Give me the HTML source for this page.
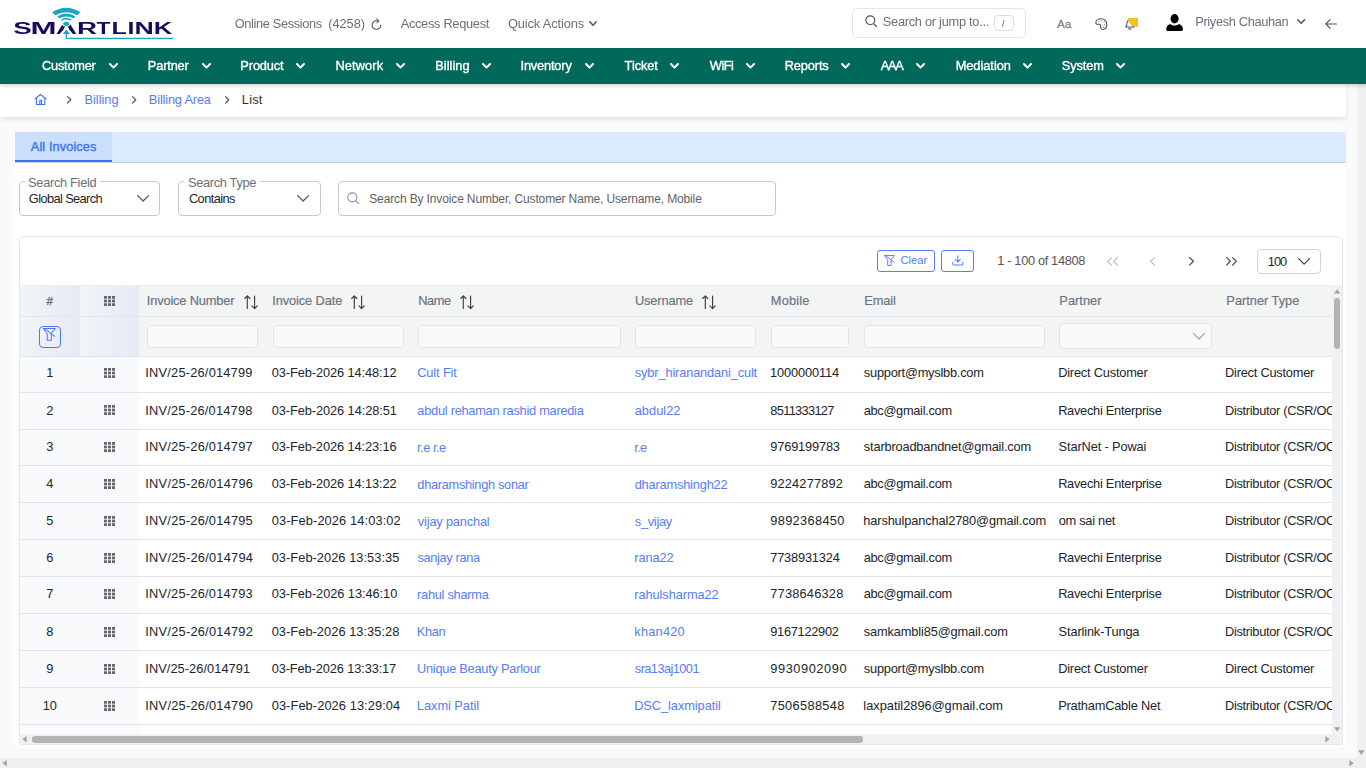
<!DOCTYPE html>
<html lang="en">
<head>
<meta charset="utf-8">
<title>SmartLink - Billing - All Invoices</title>
<style>
*{box-sizing:border-box}
html,body{margin:0;padding:0}
body{width:1366px;height:768px;overflow:hidden;background:#fafafa;font-family:"Liberation Sans", Arial, Helvetica, sans-serif;position:relative;color:#212529}
.t{position:absolute;white-space:pre;line-height:16px;height:16px;text-decoration:none;margin:0;padding:0;font-weight:400}
.a{position:absolute}
.g{will-change:transform}
.m{-webkit-text-stroke:0.35px currentColor}
.h{-webkit-text-stroke:0.18px currentColor}
svg{position:absolute;overflow:visible}
header.top{position:absolute;left:0;top:0;width:1366px;height:48px;background:#fff;z-index:6}
nav.menu{position:absolute;left:0;top:48px;width:1366px;height:36px;background:#00695c;box-shadow:0 2px 4px rgba(0,0,0,.16);z-index:5}
.crumb{position:absolute;left:0;top:84px;width:1346px;height:33px;background:#fff;box-shadow:0 2px 5px rgba(0,0,0,.10)}
.card{position:absolute;left:15px;top:132px;width:1331px;height:616px;background:#fff;border-radius:0 0 6px 6px}
.tabs{position:absolute;left:15px;top:132px;width:1331px;height:31px;background:#dbeafe;border-bottom:1px solid #c5d3e8}
.tab{position:absolute;left:15px;top:132px;width:97px;height:30px;background:#cbdffd;border-bottom:2px solid #3f6fee}
.box{position:absolute;border:1px solid #c6c8d4;border-radius:4px;background:#fff}
.panel{position:absolute;left:19px;top:236px;width:1324px;height:509px;border:1px solid #e5e7ed;border-radius:5px 5px 1px 1px;background:#fff}
.hrow{position:absolute;left:20px;top:285px;width:1312px;height:32px;background:#f3f5f5;border-top:1px solid #ecedf0;border-bottom:1px solid #e3e5ea}
.frow{position:absolute;left:20px;top:317px;width:1312px;height:40px;background:#f3f5f5;border-bottom:1px solid #dfe1e8}
.fz{position:absolute;background:linear-gradient(90deg,#f1f4f8,#e6eaf2)}
.row{position:absolute;left:20px;width:1312px;background:#fff;border-bottom:1px solid #e2e4ea}
.fzr{position:absolute;background:#f9fafb}
.fin{position:absolute;border:1px solid #e3e5e8;border-radius:4px;background:#f8f9f9}
.sbt{position:absolute;background:#f0f0f0}
.sbth{position:absolute;background:#b3b3b3;border-radius:3px}
.btn{position:absolute;border:1px solid #5b7cf4;border-radius:3px;background:#fff}
</style>
</head>
<body>
<header class="top g">
<svg style="left:0;top:0" width="180" height="48" viewBox="0 0 180 48" role="img" aria-label="SMARTLINK">
<title>SMARTLINK</title>
<g fill="#1ea5c2">
<path d="M52.1 12.3Q66.3 3.2 80.5 12.3L77.2 15.2Q66.3 9.2 55.4 15.2Z"/>
<path d="M57.2 16.5Q66.3 10.6 75.4 16.5L73.6 18.3Q66.3 14.5 59.3 18.3Z"/>
<path d="M61.1 19.4Q66.3 16.2 71.3 19.4L70.5 20.8Q66.3 18.4 62.1 20.8Z"/>
</g>
<text y="33.9" font-family="Liberation Sans, Arial, sans-serif" font-weight="700" font-size="16.0" fill="#1a0a5e"><tspan x="13.20" textLength="18.48" lengthAdjust="spacingAndGlyphs">S</tspan><tspan x="30.61" textLength="25.97" lengthAdjust="spacingAndGlyphs">M</tspan><tspan x="55.67" textLength="21.31" lengthAdjust="spacingAndGlyphs">A</tspan><tspan x="76.95" textLength="20.02" lengthAdjust="spacingAndGlyphs">R</tspan><tspan x="96.55" textLength="13.80" lengthAdjust="spacingAndGlyphs">T</tspan><tspan x="111.42" textLength="15.35" lengthAdjust="spacingAndGlyphs">L</tspan><tspan x="127.53" textLength="6.94" lengthAdjust="spacingAndGlyphs">I</tspan><tspan x="134.51" textLength="19.29" lengthAdjust="spacingAndGlyphs">N</tspan><tspan x="153.88" textLength="18.56" lengthAdjust="spacingAndGlyphs">K</tspan></text>
<path d="M66.3 26.6L73.2 34.3H59.4Z" fill="#fff"/>
<ellipse cx="66.2" cy="23.6" rx="4.2" ry="3.2" fill="#fff"/>
<ellipse cx="66.2" cy="23.8" rx="3" ry="2.1" fill="#1ea5c2"/>
<path d="M66.3 29.5L70 33.9H62.6Z" fill="#1ea5c2"/>
<path d="M66.3 33.5V38.4H173" fill="none" stroke="#1ea5c2" stroke-width="1.2"/>
</svg>
<span class="t" style="left:234.69px;top:16px;font-size:12.8px;color:#6a7079;letter-spacing:-0.351px;">Online Sessions</span>
<span class="t" style="left:328.31px;top:16px;font-size:12.8px;color:#6a7079;letter-spacing:-0.062px;">(4258)</span>
<svg style="left:370.9px;top:18.1px" width="11.3" height="12.2" viewBox="0 0 13 14" fill="none" stroke="#4b5563" stroke-width="1.2" stroke-linecap="round" stroke-linejoin="round"><path d="M11.2 8.2A5 5 0 1 1 6.3 3.2H8.6"/><path d="M6.8 0.9L9 3.2L6.8 5.5"/></svg>
<span class="t" style="left:400.68px;top:16px;font-size:12.8px;color:#6a7079;letter-spacing:-0.296px;">Access Request</span>
<span class="t" style="left:507.89px;top:16px;font-size:12.8px;color:#6a7079;letter-spacing:-0.097px;">Quick Actions</span>
<svg style="left:589.4px;top:21px" width="8" height="5" viewBox="0 0 8 5"><polyline points="0.75,0.75 4.0,4.25 7.25,0.75" fill="none" stroke="#4b5563" stroke-width="1.5" stroke-linecap="round" stroke-linejoin="round"/></svg>
<div class="box" style="left:852px;top:8px;width:174px;height:30px;border-color:#e3e4ec;border-radius:5px"></div>
<svg style="left:865px;top:15.3px" width="12.2" height="12.2" viewBox="0 0 12 12" fill="none" stroke="#4b5563" stroke-width="1.2" stroke-linecap="round"><circle cx="5.2" cy="5.2" r="4.4"/><path d="M8.5 8.5L11.3 11.3"/></svg>
<span class="t" style="left:882.82px;top:14px;font-size:12.8px;color:#6a7079;letter-spacing:-0.275px;">Search or jump to...</span>
<div class="box" style="left:994px;top:15px;width:20px;height:16px;border-color:#dcdde3;border-radius:4px"></div>
<span class="t" style="left:1002.10px;top:16px;font-size:9px;color:#4b5563;">/</span>
<span class="t m" style="left:1057.28px;top:16px;font-size:11.4px;color:#858585;letter-spacing:0.185px;">Aa</span>
<svg style="left:1095px;top:17.7px" width="12.6" height="12.4" viewBox="0 0 13 13" fill="none" stroke="#4b5563" stroke-width="1.2" stroke-linejoin="round" stroke-linecap="round">
<path d="M6.3 0.8C3.1 0.8 0.7 2.6 0.7 4.9C0.7 6.2 1.9 6.8 3.4 6.6C5.2 6.4 6.2 7.4 5.9 9.2C5.7 10.8 6.6 12.2 8.2 12.1C10.6 11.9 12.3 9.5 12.3 6.6C12.3 3.3 9.7 0.8 6.3 0.8Z"/>
<g stroke-width="1.1"><path d="M4 3.4h.1M6.8 2.8h.1M9.4 4.2h.1M10.1 7.1h.1M8.6 9.8h.1"/></g></svg>
<svg style="left:1125.2px;top:19.1px" width="9.8" height="11.2" viewBox="0 0 11 12" fill="none" stroke="#4b525d" stroke-width="1.2" stroke-linejoin="round" stroke-linecap="round"><path d="M0.8 8.6C2 7.6 2.2 6.2 2.2 4.6C2.2 2.4 3.6 0.8 5.5 0.8C7.4 0.8 8.8 2.4 8.8 4.6C8.8 6.2 9 7.6 10.2 8.6Z"/><path d="M4.2 10.4A1.5 1.5 0 0 0 6.8 10.4"/></svg>
<div class="a" style="left:1128px;top:18px;width:10px;height:9.4px;background:#fbbc2c;border-radius:0 0 0 9px"></div>
<svg style="left:1166.2px;top:13.5px" width="17.2" height="17.2" viewBox="0 0 17 17" fill="#000"><ellipse cx="8.5" cy="4.7" rx="4" ry="4.6"/><path d="M0.2 15.2C0.2 12 2.6 10.2 4.6 10.2C5.6 11 7 11.4 8.5 11.4C10 11.4 11.4 11 12.4 10.2C14.4 10.2 16.8 12 16.8 15.2C16.8 16.3 16.2 16.9 15.2 16.9H1.8C0.8 16.9 0.2 16.3 0.2 15.2Z"/></svg>
<span class="t" style="left:1195.25px;top:14px;font-size:12.8px;color:#6a7079;letter-spacing:-0.342px;">Priyesh Chauhan</span>
<svg style="left:1296.8px;top:19.4px" width="8.4" height="5" viewBox="0 0 8.4 5"><polyline points="0.75,0.75 4.2,4.25 7.65,0.75" fill="none" stroke="#4b5563" stroke-width="1.5" stroke-linecap="round" stroke-linejoin="round"/></svg>
<svg style="left:1324.6px;top:18.6px" width="12.2" height="10.3" viewBox="0 0 13 11" fill="none" stroke="#4b5563" stroke-width="1.2" stroke-linecap="round" stroke-linejoin="round"><path d="M12.2 5.3H0.9M5.4 0.7L0.8 5.3L5.4 9.9"/></svg>
</header>
<nav class="menu g">
<span class="t m" style="left:42.05px;top:10px;font-size:12.8px;color:#fff;letter-spacing:-0.244px;">Customer</span>
<svg style="left:109.2px;top:15.200000000000003px" width="9" height="5.6" viewBox="0 0 9 5.6"><polyline points="1.0,1.0 4.5,4.6 8.0,1.0" fill="none" stroke="#fff" stroke-width="2" stroke-linecap="round" stroke-linejoin="round"/></svg>
<span class="t m" style="left:147.85px;top:10px;font-size:12.8px;color:#fff;letter-spacing:-0.168px;">Partner</span>
<svg style="left:202.2px;top:15.200000000000003px" width="9" height="5.6" viewBox="0 0 9 5.6"><polyline points="1.0,1.0 4.5,4.6 8.0,1.0" fill="none" stroke="#fff" stroke-width="2" stroke-linecap="round" stroke-linejoin="round"/></svg>
<span class="t m" style="left:240.35px;top:10px;font-size:12.8px;color:#fff;letter-spacing:-0.128px;">Product</span>
<svg style="left:296.4px;top:15.200000000000003px" width="9" height="5.6" viewBox="0 0 9 5.6"><polyline points="1.0,1.0 4.5,4.6 8.0,1.0" fill="none" stroke="#fff" stroke-width="2" stroke-linecap="round" stroke-linejoin="round"/></svg>
<span class="t m" style="left:335.45px;top:10px;font-size:12.8px;color:#fff;letter-spacing:0.116px;">Network</span>
<svg style="left:396px;top:15.200000000000003px" width="9" height="5.6" viewBox="0 0 9 5.6"><polyline points="1.0,1.0 4.5,4.6 8.0,1.0" fill="none" stroke="#fff" stroke-width="2" stroke-linecap="round" stroke-linejoin="round"/></svg>
<span class="t m" style="left:435.15px;top:10px;font-size:12.8px;color:#fff;letter-spacing:0.053px;">Billing</span>
<svg style="left:481.8px;top:15.200000000000003px" width="9" height="5.6" viewBox="0 0 9 5.6"><polyline points="1.0,1.0 4.5,4.6 8.0,1.0" fill="none" stroke="#fff" stroke-width="2" stroke-linecap="round" stroke-linejoin="round"/></svg>
<span class="t m" style="left:520.52px;top:10px;font-size:12.8px;color:#fff;letter-spacing:-0.167px;">Inventory</span>
<svg style="left:584.6px;top:15.200000000000003px" width="9" height="5.6" viewBox="0 0 9 5.6"><polyline points="1.0,1.0 4.5,4.6 8.0,1.0" fill="none" stroke="#fff" stroke-width="2" stroke-linecap="round" stroke-linejoin="round"/></svg>
<span class="t m" style="left:624.61px;top:10px;font-size:12.8px;color:#fff;letter-spacing:-0.075px;">Ticket</span>
<svg style="left:669.8px;top:15.200000000000003px" width="9" height="5.6" viewBox="0 0 9 5.6"><polyline points="1.0,1.0 4.5,4.6 8.0,1.0" fill="none" stroke="#fff" stroke-width="2" stroke-linecap="round" stroke-linejoin="round"/></svg>
<span class="t m" style="left:709.84px;top:10px;font-size:12.8px;color:#fff;letter-spacing:-0.492px;">WiFi</span>
<svg style="left:746px;top:15.200000000000003px" width="9" height="5.6" viewBox="0 0 9 5.6"><polyline points="1.0,1.0 4.5,4.6 8.0,1.0" fill="none" stroke="#fff" stroke-width="2" stroke-linecap="round" stroke-linejoin="round"/></svg>
<span class="t m" style="left:784.65px;top:10px;font-size:12.8px;color:#fff;letter-spacing:-0.117px;">Reports</span>
<svg style="left:841px;top:15.200000000000003px" width="9" height="5.6" viewBox="0 0 9 5.6"><polyline points="1.0,1.0 4.5,4.6 8.0,1.0" fill="none" stroke="#fff" stroke-width="2" stroke-linecap="round" stroke-linejoin="round"/></svg>
<span class="t m" style="left:880.67px;top:10px;font-size:12.8px;color:#fff;letter-spacing:-1.230px;">AAA</span>
<svg style="left:916.3px;top:15.200000000000003px" width="9" height="5.6" viewBox="0 0 9 5.6"><polyline points="1.0,1.0 4.5,4.6 8.0,1.0" fill="none" stroke="#fff" stroke-width="2" stroke-linecap="round" stroke-linejoin="round"/></svg>
<span class="t m" style="left:955.65px;top:10px;font-size:12.8px;color:#fff;letter-spacing:-0.027px;">Mediation</span>
<svg style="left:1023px;top:15.200000000000003px" width="9" height="5.6" viewBox="0 0 9 5.6"><polyline points="1.0,1.0 4.5,4.6 8.0,1.0" fill="none" stroke="#fff" stroke-width="2" stroke-linecap="round" stroke-linejoin="round"/></svg>
<span class="t m" style="left:1061.82px;top:10px;font-size:12.8px;color:#fff;letter-spacing:-0.109px;">System</span>
<svg style="left:1116px;top:15.200000000000003px" width="9" height="5.6" viewBox="0 0 9 5.6"><polyline points="1.0,1.0 4.5,4.6 8.0,1.0" fill="none" stroke="#fff" stroke-width="2" stroke-linecap="round" stroke-linejoin="round"/></svg>
</nav>
<div class="crumb"></div>
<svg style="left:0;top:0" width="60" height="110" viewBox="0 0 60 110" fill="none" stroke="#3f6df3" stroke-width="1.1" stroke-linejoin="round" stroke-linecap="round"><path d="M34.9 98.9L40.5 94.5L46.2 98.9"/><path d="M36.4 98.2V104.5H44.8V98.2"/><path d="M39.8 104.5V100.2H41.5V104.5"/></svg>
<svg style="left:66.7px;top:95.8px" width="4.4" height="7.6" viewBox="0 0 4.4 7.6"><polyline points="0.6,0.6 3.8000000000000003,3.8 0.6,7.0" fill="none" stroke="#5a534c" stroke-width="1.2" stroke-linecap="round" stroke-linejoin="round"/></svg>
<span class="t" style="left:84.45px;top:92px;font-size:12.8px;color:#567df5;letter-spacing:0.003px;">Billing</span>
<svg style="left:131.7px;top:95.8px" width="4.4" height="7.6" viewBox="0 0 4.4 7.6"><polyline points="0.6,0.6 3.8000000000000003,3.8 0.6,7.0" fill="none" stroke="#5a534c" stroke-width="1.2" stroke-linecap="round" stroke-linejoin="round"/></svg>
<span class="t" style="left:148.85px;top:92px;font-size:12.8px;color:#567df5;letter-spacing:-0.171px;">Billing Area</span>
<svg style="left:224.5px;top:95.8px" width="4.4" height="7.6" viewBox="0 0 4.4 7.6"><polyline points="0.6,0.6 3.8000000000000003,3.8 0.6,7.0" fill="none" stroke="#5a534c" stroke-width="1.2" stroke-linecap="round" stroke-linejoin="round"/></svg>
<span class="t" style="left:241.85px;top:92px;font-size:12.8px;color:#333;letter-spacing:0.207px;">List</span>
<section class="card"></section>
<div class="tabs"></div><div class="tab"></div>
<span class="t m" style="left:30.77px;top:139px;font-size:12.8px;color:#3f6fee;letter-spacing:0.087px;">All Invoices</span>
<div class="box" style="left:19px;top:181px;width:141px;height:35px"></div>
<div class="a" style="left:25px;top:176px;width:75px;height:10px;background:#fff"></div>
<span class="t" style="left:28.12px;top:175px;font-size:12.8px;color:#6a7079;letter-spacing:-0.303px;">Search Field</span>
<span class="t" style="left:28.86px;top:191px;font-size:12.8px;color:#212529;letter-spacing:-0.610px;">Global Search</span>
<svg style="left:136.8px;top:194.8px" width="12.2" height="6.6" viewBox="0 0 12.2 6.6"><polyline points="0.65,0.65 6.1,5.949999999999999 11.549999999999999,0.65" fill="none" stroke="#555" stroke-width="1.3" stroke-linecap="round" stroke-linejoin="round"/></svg>
<div class="box" style="left:178px;top:181px;width:143px;height:35px"></div>
<div class="a" style="left:184px;top:176px;width:76px;height:10px;background:#fff"></div>
<span class="t" style="left:188.12px;top:175px;font-size:12.8px;color:#6a7079;letter-spacing:-0.338px;">Search Type</span>
<span class="t" style="left:188.95px;top:191px;font-size:12.8px;color:#212529;letter-spacing:-0.572px;">Contains</span>
<svg style="left:297.2px;top:194.8px" width="12.2" height="6.6" viewBox="0 0 12.2 6.6"><polyline points="0.65,0.65 6.1,5.949999999999999 11.549999999999999,0.65" fill="none" stroke="#555" stroke-width="1.3" stroke-linecap="round" stroke-linejoin="round"/></svg>
<div class="box" style="left:338px;top:181px;width:438px;height:35px"></div>
<svg style="left:347.4px;top:191.8px" width="12.4" height="12.4" viewBox="0 0 12 12" fill="none" stroke="#8593b0" stroke-width="1.1" stroke-linecap="round"><circle cx="5.2" cy="5.2" r="4.4"/><path d="M8.5 8.5L11.3 11.3"/></svg>
<span class="t" style="left:369.26px;top:191px;font-size:12px;color:#626262;letter-spacing:-0.135px;">Search By Invoice Number, Customer Name, Username, Mobile</span>
<div class="panel"></div>
<div class="btn" style="left:876.5px;top:250px;width:58.5px;height:22px"></div>
<svg style="left:883.8px;top:254.8px" width="11.2" height="11.2" viewBox="0 0 14 14" fill="none" stroke="#5b7cf4" stroke-width="1.19" stroke-linejoin="miter" stroke-linecap="butt"><path d="M0.4 0.65H13.05L8.95 5.85V13.1H4.6V6.25Z"/><path d="M1.9 0.7L12.9 9.3"/></svg>
<span class="t" style="left:900.53px;top:252px;font-size:11.2px;color:#5b7cf4;letter-spacing:0.005px;">Clear</span>
<div class="btn" style="left:941px;top:250px;width:33px;height:22px"></div>
<svg style="left:951.6px;top:255.2px" width="11.6" height="10.6" viewBox="0 0 12 11" fill="none" stroke="#5b7cf4" stroke-width="1.1" stroke-linecap="round" stroke-linejoin="round"><path d="M6 0.7V7M3.4 4.6L6 7.2L8.6 4.6"/><path d="M0.8 7.4V9.4C0.8 10 1.2 10.3 1.8 10.3H10.2C10.8 10.3 11.2 10 11.2 9.4V7.4"/></svg>
<span class="t" style="left:997.22px;top:253px;font-size:12.8px;color:#555;letter-spacing:-0.339px;">1 - 100 of 14808</span>
<svg style="left:1107.4px;top:257px" width="5" height="8.6" viewBox="0 0 5 8.6"><polyline points="4.45,0.55 0.55,4.3 4.45,8.049999999999999" fill="none" stroke="#b4b7bd" stroke-width="1.1" stroke-linecap="round" stroke-linejoin="round"/></svg><svg style="left:1113.4px;top:257px" width="5" height="8.6" viewBox="0 0 5 8.6"><polyline points="4.45,0.55 0.55,4.3 4.45,8.049999999999999" fill="none" stroke="#b4b7bd" stroke-width="1.1" stroke-linecap="round" stroke-linejoin="round"/></svg>
<svg style="left:1150px;top:257px" width="5.2" height="8.6" viewBox="0 0 5.2 8.6"><polyline points="4.65,0.55 0.55,4.3 4.65,8.049999999999999" fill="none" stroke="#b4b7bd" stroke-width="1.1" stroke-linecap="round" stroke-linejoin="round"/></svg>
<svg style="left:1188.6px;top:257px" width="5.2" height="8.6" viewBox="0 0 5.2 8.6"><polyline points="0.65,0.65 4.55,4.3 0.65,7.949999999999999" fill="none" stroke="#555" stroke-width="1.3" stroke-linecap="round" stroke-linejoin="round"/></svg>
<svg style="left:1225.8px;top:257px" width="5" height="8.6" viewBox="0 0 5 8.6"><polyline points="0.65,0.65 4.35,4.3 0.65,7.949999999999999" fill="none" stroke="#555" stroke-width="1.3" stroke-linecap="round" stroke-linejoin="round"/></svg><svg style="left:1231.8px;top:257px" width="5" height="8.6" viewBox="0 0 5 8.6"><polyline points="0.65,0.65 4.35,4.3 0.65,7.949999999999999" fill="none" stroke="#555" stroke-width="1.3" stroke-linecap="round" stroke-linejoin="round"/></svg>
<div class="box" style="left:1257px;top:249px;width:64px;height:25px;border-color:#cfd2db;border-radius:4px"></div>
<span class="t" style="left:1267.83px;top:254px;font-size:12.8px;color:#212529;letter-spacing:-1.042px;">100</span>
<svg style="left:1297.7px;top:258px" width="12.2" height="6.8" viewBox="0 0 12.2 6.8"><polyline points="0.65,0.65 6.1,6.1499999999999995 11.549999999999999,0.65" fill="none" stroke="#444" stroke-width="1.3" stroke-linecap="round" stroke-linejoin="round"/></svg>
<div class="hrow"></div>
<div class="fz" style="left:20px;top:286px;width:60px;height:30px"></div>
<div class="fz" style="left:80px;top:286px;width:59px;height:30px"></div>
<span class="t m" style="left:46.45px;top:293px;font-size:11.6px;color:#6b7280;">#</span>
<svg style="left:104px;top:296px" width="11" height="10" viewBox="0 0 11 11" preserveAspectRatio="none" fill="#63676d"><rect x="0" y="0" width="3" height="3"/><rect x="0" y="4" width="3" height="3"/><rect x="0" y="8" width="3" height="3"/><rect x="4" y="0" width="3" height="3"/><rect x="4" y="4" width="3" height="3"/><rect x="4" y="8" width="3" height="3"/><rect x="8" y="0" width="3" height="3"/><rect x="8" y="4" width="3" height="3"/><rect x="8" y="8" width="3" height="3"/></svg>
<span class="t h" style="left:146.82px;top:293px;font-size:12.8px;color:#6b7280;letter-spacing:-0.156px;">Invoice Number</span>
<svg style="left:243.6px;top:294.8px" width="14" height="14.4" viewBox="0 0 14 14.4" fill="none" stroke="#3a3f47" stroke-width="1.15" stroke-linecap="round" stroke-linejoin="round"><path d="M3.3 13.4V0.9M0.7 3.5L3.3 0.8L5.9 3.5"/><path d="M10.6 1V13.5M8 10.9L10.6 13.6L13.2 10.9"/></svg>
<span class="t h" style="left:272.22px;top:293px;font-size:12.8px;color:#6b7280;letter-spacing:-0.090px;">Invoice Date</span>
<svg style="left:351.4px;top:294.8px" width="14" height="14.4" viewBox="0 0 14 14.4" fill="none" stroke="#3a3f47" stroke-width="1.15" stroke-linecap="round" stroke-linejoin="round"><path d="M3.3 13.4V0.9M0.7 3.5L3.3 0.8L5.9 3.5"/><path d="M10.6 1V13.5M8 10.9L10.6 13.6L13.2 10.9"/></svg>
<span class="t h" style="left:418.15px;top:293px;font-size:12.8px;color:#6b7280;letter-spacing:-0.374px;">Name</span>
<svg style="left:460px;top:294.8px" width="14" height="14.4" viewBox="0 0 14 14.4" fill="none" stroke="#3a3f47" stroke-width="1.15" stroke-linecap="round" stroke-linejoin="round"><path d="M3.3 13.4V0.9M0.7 3.5L3.3 0.8L5.9 3.5"/><path d="M10.6 1V13.5M8 10.9L10.6 13.6L13.2 10.9"/></svg>
<span class="t h" style="left:634.91px;top:293px;font-size:12.8px;color:#6b7280;letter-spacing:-0.111px;">Username</span>
<svg style="left:702.4px;top:294.8px" width="14" height="14.4" viewBox="0 0 14 14.4" fill="none" stroke="#3a3f47" stroke-width="1.15" stroke-linecap="round" stroke-linejoin="round"><path d="M3.3 13.4V0.9M0.7 3.5L3.3 0.8L5.9 3.5"/><path d="M10.6 1V13.5M8 10.9L10.6 13.6L13.2 10.9"/></svg>
<span class="t h" style="left:770.85px;top:293px;font-size:12.8px;color:#6b7280;letter-spacing:0.163px;">Mobile</span>
<span class="t h" style="left:864.35px;top:293px;font-size:12.8px;color:#6b7280;letter-spacing:-0.098px;">Email</span>
<span class="t h" style="left:1059.35px;top:293px;font-size:12.8px;color:#6b7280;letter-spacing:0.032px;">Partner</span>
<span class="t h" style="left:1226.35px;top:293px;font-size:12.8px;color:#6b7280;letter-spacing:-0.003px;">Partner Type</span>
<div class="frow"></div>
<div class="fz" style="left:20px;top:317px;width:60px;height:39px"></div>
<div class="fz" style="left:80px;top:317px;width:59px;height:39px"></div>
<div class="btn" style="left:39px;top:325.6px;width:22px;height:22px;border-color:#4a7af5;border-radius:4px;background:transparent"></div>
<svg style="left:43.1px;top:328.1px" width="13" height="13" viewBox="0 0 14 14" fill="none" stroke="#4a7af5" stroke-width="1.08" stroke-linejoin="miter" stroke-linecap="butt"><path d="M0.4 0.65H13.05L8.95 5.85V13.1H4.6V6.25Z"/><path d="M1.9 0.7L12.9 9.3"/></svg>
<div class="fin" style="left:147px;top:325px;width:111px;height:23.4px"></div>
<div class="fin" style="left:273px;top:325px;width:131px;height:23.4px"></div>
<div class="fin" style="left:418px;top:325px;width:203px;height:23.4px"></div>
<div class="fin" style="left:634.6px;top:325px;width:121.39999999999998px;height:23.4px"></div>
<div class="fin" style="left:771px;top:325px;width:78.39999999999998px;height:23.4px"></div>
<div class="fin" style="left:864px;top:325px;width:181px;height:23.4px"></div>
<div class="fin" style="left:1059px;top:323.3px;width:152.6px;height:25.6px"></div>
<svg style="left:1192.8px;top:332.6px" width="12" height="6.6" viewBox="0 0 12 6.6"><polyline points="0.6,0.6 6.0,6.0 11.4,0.6" fill="none" stroke="#9ea2a8" stroke-width="1.2" stroke-linecap="round" stroke-linejoin="round"/></svg>
<div class="row" style="top:357px;height:36px"></div>
<div class="fzr" style="left:20px;top:357px;width:119px;height:35px"></div>
<span class="t" style="left:49.80px;top:365px;font-size:12.8px;color:#212529;transform:translateX(-50%);">1</span>
<svg style="left:104px;top:368px" width="11" height="10" viewBox="0 0 11 11" preserveAspectRatio="none" fill="#63676d"><rect x="0" y="0" width="3" height="3"/><rect x="0" y="4" width="3" height="3"/><rect x="0" y="8" width="3" height="3"/><rect x="4" y="0" width="3" height="3"/><rect x="4" y="4" width="3" height="3"/><rect x="4" y="8" width="3" height="3"/><rect x="8" y="0" width="3" height="3"/><rect x="8" y="4" width="3" height="3"/><rect x="8" y="8" width="3" height="3"/></svg>
<span class="t" style="left:145.32px;top:365px;font-size:12.8px;color:#212529;letter-spacing:0.214px;">INV/25-26/014799</span>
<span class="t" style="left:271.70px;top:365px;font-size:12.8px;color:#212529;letter-spacing:-0.085px;">03-Feb-2026 14:48:12</span>
<span class="t" style="left:417.25px;top:365px;font-size:12.8px;color:#567df5;letter-spacing:-0.127px;">Cult Fit</span>
<span class="t" style="left:634.84px;top:365px;font-size:12.8px;color:#567df5;letter-spacing:-0.143px;">sybr_hiranandani_cult</span>
<span class="t" style="left:769.92px;top:365px;font-size:12.8px;color:#212529;letter-spacing:-0.109px;">1000000114</span>
<span class="t" style="left:863.84px;top:365px;font-size:12.8px;color:#212529;letter-spacing:-0.227px;">support@myslbb.com</span>
<span class="t" style="left:1058.15px;top:365px;font-size:12.8px;color:#212529;letter-spacing:-0.199px;">Direct Customer</span>
<div class="a" style="left:1220px;top:357px;width:112px;height:35px;overflow:hidden">
<span class="t" style="left:5.05px;top:8px;font-size:12.8px;color:#212529;letter-spacing:-0.228px;">Direct Customer</span>
</div>
<div class="row" style="top:393px;height:37px"></div>
<div class="fzr" style="left:20px;top:393px;width:119px;height:36px"></div>
<span class="t" style="left:49.80px;top:403px;font-size:12.8px;color:#212529;transform:translateX(-50%);">2</span>
<svg style="left:104px;top:405px" width="11" height="10" viewBox="0 0 11 11" preserveAspectRatio="none" fill="#63676d"><rect x="0" y="0" width="3" height="3"/><rect x="0" y="4" width="3" height="3"/><rect x="0" y="8" width="3" height="3"/><rect x="4" y="0" width="3" height="3"/><rect x="4" y="4" width="3" height="3"/><rect x="4" y="8" width="3" height="3"/><rect x="8" y="0" width="3" height="3"/><rect x="8" y="4" width="3" height="3"/><rect x="8" y="8" width="3" height="3"/></svg>
<span class="t" style="left:145.32px;top:403px;font-size:12.8px;color:#212529;letter-spacing:0.211px;">INV/25-26/014798</span>
<span class="t" style="left:271.70px;top:403px;font-size:12.8px;color:#212529;letter-spacing:-0.075px;">03-Feb-2026 14:28:51</span>
<span class="t" style="left:417.36px;top:403px;font-size:12.8px;color:#567df5;letter-spacing:-0.264px;">abdul rehaman rashid maredia</span>
<span class="t" style="left:634.66px;top:403px;font-size:12.8px;color:#567df5;letter-spacing:0.040px;">abdul22</span>
<span class="t" style="left:770.34px;top:403px;font-size:12.8px;color:#212529;letter-spacing:-0.682px;">8511333127</span>
<span class="t" style="left:863.66px;top:403px;font-size:12.8px;color:#212529;letter-spacing:-0.296px;">abc@gmail.com</span>
<span class="t" style="left:1058.15px;top:403px;font-size:12.8px;color:#212529;letter-spacing:-0.265px;">Ravechi Enterprise</span>
<div class="a" style="left:1220px;top:393px;width:112px;height:36px;overflow:hidden">
<span class="t" style="left:5.05px;top:10px;font-size:12.8px;color:#212529;letter-spacing:-0.311px;">Distributor (CSR/OCSR)</span>
</div>
<div class="row" style="top:430px;height:36px"></div>
<div class="fzr" style="left:20px;top:430px;width:119px;height:35px"></div>
<span class="t" style="left:49.80px;top:439px;font-size:12.8px;color:#212529;transform:translateX(-50%);">3</span>
<svg style="left:104px;top:442px" width="11" height="10" viewBox="0 0 11 11" preserveAspectRatio="none" fill="#63676d"><rect x="0" y="0" width="3" height="3"/><rect x="0" y="4" width="3" height="3"/><rect x="0" y="8" width="3" height="3"/><rect x="4" y="0" width="3" height="3"/><rect x="4" y="4" width="3" height="3"/><rect x="4" y="8" width="3" height="3"/><rect x="8" y="0" width="3" height="3"/><rect x="8" y="4" width="3" height="3"/><rect x="8" y="8" width="3" height="3"/></svg>
<span class="t" style="left:145.32px;top:439px;font-size:12.8px;color:#212529;letter-spacing:0.230px;">INV/25-26/014797</span>
<span class="t" style="left:271.70px;top:439px;font-size:12.8px;color:#212529;letter-spacing:-0.089px;">03-Feb-2026 14:23:16</span>
<span class="t" style="left:417.05px;top:440px;font-size:12.8px;color:#567df5;letter-spacing:-0.483px;">r.e r.e</span>
<span class="t" style="left:634.35px;top:440px;font-size:12.8px;color:#567df5;letter-spacing:-0.708px;">r.e</span>
<span class="t" style="left:770.30px;top:439px;font-size:12.8px;color:#212529;letter-spacing:-0.168px;">9769199783</span>
<span class="t" style="left:863.84px;top:439px;font-size:12.8px;color:#212529;letter-spacing:-0.173px;">starbroadbandnet@gmail.com</span>
<span class="t" style="left:1058.62px;top:439px;font-size:12.8px;color:#212529;letter-spacing:-0.134px;">StarNet - Powai</span>
<div class="a" style="left:1220px;top:430px;width:112px;height:35px;overflow:hidden">
<span class="t" style="left:5.05px;top:9px;font-size:12.8px;color:#212529;letter-spacing:-0.311px;">Distributor (CSR/OCSR)</span>
</div>
<div class="row" style="top:466px;height:37px"></div>
<div class="fzr" style="left:20px;top:466px;width:119px;height:36px"></div>
<span class="t" style="left:49.80px;top:476px;font-size:12.8px;color:#212529;transform:translateX(-50%);">4</span>
<svg style="left:104px;top:479px" width="11" height="10" viewBox="0 0 11 11" preserveAspectRatio="none" fill="#63676d"><rect x="0" y="0" width="3" height="3"/><rect x="0" y="4" width="3" height="3"/><rect x="0" y="8" width="3" height="3"/><rect x="4" y="0" width="3" height="3"/><rect x="4" y="4" width="3" height="3"/><rect x="4" y="8" width="3" height="3"/><rect x="8" y="0" width="3" height="3"/><rect x="8" y="4" width="3" height="3"/><rect x="8" y="8" width="3" height="3"/></svg>
<span class="t" style="left:145.32px;top:476px;font-size:12.8px;color:#212529;letter-spacing:0.251px;">INV/25-26/014796</span>
<span class="t" style="left:271.70px;top:476px;font-size:12.8px;color:#212529;letter-spacing:-0.085px;">03-Feb-2026 14:13:22</span>
<span class="t" style="left:417.36px;top:477px;font-size:12.8px;color:#567df5;letter-spacing:-0.307px;">dharamshingh sonar</span>
<span class="t" style="left:634.66px;top:477px;font-size:12.8px;color:#567df5;letter-spacing:-0.182px;">dharamshingh22</span>
<span class="t" style="left:770.30px;top:476px;font-size:12.8px;color:#212529;letter-spacing:0.152px;">9224277892</span>
<span class="t" style="left:863.66px;top:476px;font-size:12.8px;color:#212529;letter-spacing:-0.279px;">abc@gmail.com</span>
<span class="t" style="left:1058.15px;top:476px;font-size:12.8px;color:#212529;letter-spacing:-0.259px;">Ravechi Enterprise</span>
<div class="a" style="left:1220px;top:466px;width:112px;height:36px;overflow:hidden">
<span class="t" style="left:5.05px;top:10px;font-size:12.8px;color:#212529;letter-spacing:-0.311px;">Distributor (CSR/OCSR)</span>
</div>
<div class="row" style="top:503px;height:37px"></div>
<div class="fzr" style="left:20px;top:503px;width:119px;height:36px"></div>
<span class="t" style="left:49.80px;top:513px;font-size:12.8px;color:#212529;transform:translateX(-50%);">5</span>
<svg style="left:104px;top:516px" width="11" height="10" viewBox="0 0 11 11" preserveAspectRatio="none" fill="#63676d"><rect x="0" y="0" width="3" height="3"/><rect x="0" y="4" width="3" height="3"/><rect x="0" y="8" width="3" height="3"/><rect x="4" y="0" width="3" height="3"/><rect x="4" y="4" width="3" height="3"/><rect x="4" y="8" width="3" height="3"/><rect x="8" y="0" width="3" height="3"/><rect x="8" y="4" width="3" height="3"/><rect x="8" y="8" width="3" height="3"/></svg>
<span class="t" style="left:145.32px;top:513px;font-size:12.8px;color:#212529;letter-spacing:0.236px;">INV/25-26/014795</span>
<span class="t" style="left:271.70px;top:513px;font-size:12.8px;color:#212529;letter-spacing:0.126px;">03-Feb-2026 14:03:02</span>
<span class="t" style="left:417.86px;top:514px;font-size:12.8px;color:#567df5;letter-spacing:-0.182px;">vijay panchal</span>
<span class="t" style="left:634.84px;top:514px;font-size:12.8px;color:#567df5;letter-spacing:-0.291px;">s_vijay</span>
<span class="t" style="left:770.30px;top:513px;font-size:12.8px;color:#212529;letter-spacing:0.325px;">9892368450</span>
<span class="t" style="left:863.31px;top:513px;font-size:12.8px;color:#212529;letter-spacing:-0.139px;">harshulpanchal2780@gmail.com</span>
<span class="t" style="left:1058.66px;top:513px;font-size:12.8px;color:#212529;letter-spacing:-0.268px;">om sai net</span>
<div class="a" style="left:1220px;top:503px;width:112px;height:36px;overflow:hidden">
<span class="t" style="left:5.05px;top:10px;font-size:12.8px;color:#212529;letter-spacing:-0.311px;">Distributor (CSR/OCSR)</span>
</div>
<div class="row" style="top:540px;height:37px"></div>
<div class="fzr" style="left:20px;top:540px;width:119px;height:36px"></div>
<span class="t" style="left:49.80px;top:550px;font-size:12.8px;color:#212529;transform:translateX(-50%);">6</span>
<svg style="left:104px;top:553px" width="11" height="10" viewBox="0 0 11 11" preserveAspectRatio="none" fill="#63676d"><rect x="0" y="0" width="3" height="3"/><rect x="0" y="4" width="3" height="3"/><rect x="0" y="8" width="3" height="3"/><rect x="4" y="0" width="3" height="3"/><rect x="4" y="4" width="3" height="3"/><rect x="4" y="8" width="3" height="3"/><rect x="8" y="0" width="3" height="3"/><rect x="8" y="4" width="3" height="3"/><rect x="8" y="8" width="3" height="3"/></svg>
<span class="t" style="left:145.32px;top:550px;font-size:12.8px;color:#212529;letter-spacing:0.245px;">INV/25-26/014794</span>
<span class="t" style="left:271.70px;top:550px;font-size:12.8px;color:#212529;letter-spacing:0.052px;">03-Feb-2026 13:53:35</span>
<span class="t" style="left:417.54px;top:550px;font-size:12.8px;color:#567df5;letter-spacing:-0.362px;">sanjay rana</span>
<span class="t" style="left:634.35px;top:550px;font-size:12.8px;color:#567df5;letter-spacing:-0.113px;">rana22</span>
<span class="t" style="left:770.24px;top:550px;font-size:12.8px;color:#212529;letter-spacing:-0.182px;">7738931324</span>
<span class="t" style="left:863.66px;top:550px;font-size:12.8px;color:#212529;letter-spacing:-0.279px;">abc@gmail.com</span>
<span class="t" style="left:1058.15px;top:550px;font-size:12.8px;color:#212529;letter-spacing:-0.259px;">Ravechi Enterprise</span>
<div class="a" style="left:1220px;top:540px;width:112px;height:36px;overflow:hidden">
<span class="t" style="left:5.05px;top:10px;font-size:12.8px;color:#212529;letter-spacing:-0.311px;">Distributor (CSR/OCSR)</span>
</div>
<div class="row" style="top:577px;height:37px"></div>
<div class="fzr" style="left:20px;top:577px;width:119px;height:36px"></div>
<span class="t" style="left:49.80px;top:586px;font-size:12.8px;color:#212529;transform:translateX(-50%);">7</span>
<svg style="left:104px;top:589px" width="11" height="10" viewBox="0 0 11 11" preserveAspectRatio="none" fill="#63676d"><rect x="0" y="0" width="3" height="3"/><rect x="0" y="4" width="3" height="3"/><rect x="0" y="8" width="3" height="3"/><rect x="4" y="0" width="3" height="3"/><rect x="4" y="4" width="3" height="3"/><rect x="4" y="8" width="3" height="3"/><rect x="8" y="0" width="3" height="3"/><rect x="8" y="4" width="3" height="3"/><rect x="8" y="8" width="3" height="3"/></svg>
<span class="t" style="left:145.32px;top:586px;font-size:12.8px;color:#212529;letter-spacing:0.231px;">INV/25-26/014793</span>
<span class="t" style="left:271.70px;top:586px;font-size:12.8px;color:#212529;letter-spacing:-0.056px;">03-Feb-2026 13:46:10</span>
<span class="t" style="left:417.05px;top:587px;font-size:12.8px;color:#567df5;letter-spacing:-0.267px;">rahul sharma</span>
<span class="t" style="left:634.35px;top:587px;font-size:12.8px;color:#567df5;letter-spacing:-0.090px;">rahulsharma22</span>
<span class="t" style="left:770.24px;top:586px;font-size:12.8px;color:#212529;letter-spacing:0.205px;">7738646328</span>
<span class="t" style="left:863.66px;top:586px;font-size:12.8px;color:#212529;letter-spacing:-0.279px;">abc@gmail.com</span>
<span class="t" style="left:1058.15px;top:586px;font-size:12.8px;color:#212529;letter-spacing:-0.259px;">Ravechi Enterprise</span>
<div class="a" style="left:1220px;top:577px;width:112px;height:36px;overflow:hidden">
<span class="t" style="left:5.05px;top:9px;font-size:12.8px;color:#212529;letter-spacing:-0.311px;">Distributor (CSR/OCSR)</span>
</div>
<div class="row" style="top:614px;height:37px"></div>
<div class="fzr" style="left:20px;top:614px;width:119px;height:36px"></div>
<span class="t" style="left:49.80px;top:624px;font-size:12.8px;color:#212529;transform:translateX(-50%);">8</span>
<svg style="left:104px;top:627px" width="11" height="10" viewBox="0 0 11 11" preserveAspectRatio="none" fill="#63676d"><rect x="0" y="0" width="3" height="3"/><rect x="0" y="4" width="3" height="3"/><rect x="0" y="8" width="3" height="3"/><rect x="4" y="0" width="3" height="3"/><rect x="4" y="4" width="3" height="3"/><rect x="4" y="8" width="3" height="3"/><rect x="8" y="0" width="3" height="3"/><rect x="8" y="4" width="3" height="3"/><rect x="8" y="8" width="3" height="3"/></svg>
<span class="t" style="left:145.32px;top:624px;font-size:12.8px;color:#212529;letter-spacing:0.243px;">INV/25-26/014792</span>
<span class="t" style="left:271.70px;top:624px;font-size:12.8px;color:#212529;letter-spacing:0.053px;">03-Feb-2026 13:35:28</span>
<span class="t" style="left:416.85px;top:624px;font-size:12.8px;color:#567df5;letter-spacing:-0.370px;">Khan</span>
<span class="t" style="left:634.34px;top:624px;font-size:12.8px;color:#567df5;letter-spacing:0.209px;">khan420</span>
<span class="t" style="left:770.30px;top:624px;font-size:12.8px;color:#212529;letter-spacing:-0.292px;">9167122902</span>
<span class="t" style="left:863.84px;top:624px;font-size:12.8px;color:#212529;letter-spacing:-0.135px;">samkambli85@gmail.com</span>
<span class="t" style="left:1058.62px;top:624px;font-size:12.8px;color:#212529;letter-spacing:-0.144px;">Starlink-Tunga</span>
<div class="a" style="left:1220px;top:614px;width:112px;height:36px;overflow:hidden">
<span class="t" style="left:5.05px;top:10px;font-size:12.8px;color:#212529;letter-spacing:-0.311px;">Distributor (CSR/OCSR)</span>
</div>
<div class="row" style="top:651px;height:37px"></div>
<div class="fzr" style="left:20px;top:651px;width:119px;height:36px"></div>
<span class="t" style="left:49.80px;top:661px;font-size:12.8px;color:#212529;transform:translateX(-50%);">9</span>
<svg style="left:104px;top:664px" width="11" height="10" viewBox="0 0 11 11" preserveAspectRatio="none" fill="#63676d"><rect x="0" y="0" width="3" height="3"/><rect x="0" y="4" width="3" height="3"/><rect x="0" y="8" width="3" height="3"/><rect x="4" y="0" width="3" height="3"/><rect x="4" y="4" width="3" height="3"/><rect x="4" y="8" width="3" height="3"/><rect x="8" y="0" width="3" height="3"/><rect x="8" y="4" width="3" height="3"/><rect x="8" y="8" width="3" height="3"/></svg>
<span class="t" style="left:145.32px;top:661px;font-size:12.8px;color:#212529;letter-spacing:0.055px;">INV/25-26/014791</span>
<span class="t" style="left:271.70px;top:661px;font-size:12.8px;color:#212529;letter-spacing:-0.111px;">03-Feb-2026 13:33:17</span>
<span class="t" style="left:416.91px;top:661px;font-size:12.8px;color:#567df5;letter-spacing:-0.243px;">Unique Beauty Parlour</span>
<span class="t" style="left:634.84px;top:661px;font-size:12.8px;color:#567df5;letter-spacing:-0.577px;">sra13aj1001</span>
<span class="t" style="left:770.30px;top:661px;font-size:12.8px;color:#212529;letter-spacing:0.559px;">9930902090</span>
<span class="t" style="left:863.84px;top:661px;font-size:12.8px;color:#212529;letter-spacing:-0.215px;">support@myslbb.com</span>
<span class="t" style="left:1058.15px;top:661px;font-size:12.8px;color:#212529;letter-spacing:-0.192px;">Direct Customer</span>
<div class="a" style="left:1220px;top:651px;width:112px;height:36px;overflow:hidden">
<span class="t" style="left:5.05px;top:10px;font-size:12.8px;color:#212529;letter-spacing:-0.228px;">Direct Customer</span>
</div>
<div class="row" style="top:688px;height:37px"></div>
<div class="fzr" style="left:20px;top:688px;width:119px;height:36px"></div>
<span class="t" style="left:49.80px;top:698px;font-size:12.8px;color:#212529;transform:translateX(-50%);">10</span>
<svg style="left:104px;top:701px" width="11" height="10" viewBox="0 0 11 11" preserveAspectRatio="none" fill="#63676d"><rect x="0" y="0" width="3" height="3"/><rect x="0" y="4" width="3" height="3"/><rect x="0" y="8" width="3" height="3"/><rect x="4" y="0" width="3" height="3"/><rect x="4" y="4" width="3" height="3"/><rect x="4" y="8" width="3" height="3"/><rect x="8" y="0" width="3" height="3"/><rect x="8" y="4" width="3" height="3"/><rect x="8" y="8" width="3" height="3"/></svg>
<span class="t" style="left:145.32px;top:698px;font-size:12.8px;color:#212529;letter-spacing:0.247px;">INV/25-26/014790</span>
<span class="t" style="left:271.70px;top:698px;font-size:12.8px;color:#212529;letter-spacing:0.096px;">03-Feb-2026 13:29:04</span>
<span class="t" style="left:416.85px;top:698px;font-size:12.8px;color:#567df5;letter-spacing:-0.029px;">Laxmi Patil</span>
<span class="t" style="left:634.15px;top:698px;font-size:12.8px;color:#567df5;letter-spacing:-0.060px;">DSC_laxmipatil</span>
<span class="t" style="left:770.24px;top:698px;font-size:12.8px;color:#212529;letter-spacing:0.327px;">7506588548</span>
<span class="t" style="left:863.34px;top:698px;font-size:12.8px;color:#212529;">laxpatil2896@gmail.com</span>
<span class="t" style="left:1058.15px;top:698px;font-size:12.8px;color:#212529;letter-spacing:-0.196px;">PrathamCable Net</span>
<div class="a" style="left:1220px;top:688px;width:112px;height:36px;overflow:hidden">
<span class="t" style="left:5.05px;top:10px;font-size:12.8px;color:#212529;letter-spacing:-0.311px;">Distributor (CSR/OCSR)</span>
</div>
<div class="a" style="left:20px;top:725px;width:1312px;height:9px;background:#fff"></div>
<div class="fzr" style="left:20px;top:725px;width:119px;height:9px"></div>
<div class="sbt" style="left:1332px;top:285px;width:10px;height:449px;background:#f1f1f1"></div>
<div class="sbth" style="left:1334px;top:298px;width:6px;height:51px"></div>
<svg style="left:1333.8px;top:288.8px" width="6.4" height="4.8" viewBox="0 0 6 4"><path d="M0 4L3 0L6 4Z" fill="#a2a2a2"/></svg>
<svg style="left:1333.8px;top:726.6px" width="6.4" height="4.8" viewBox="0 0 6 4"><path d="M0 0L3 4L6 0Z" fill="#a2a2a2"/></svg>
<div class="sbt" style="left:20px;top:734px;width:1322px;height:10px;background:#f1f1f1"></div>
<div class="sbth" style="left:32px;top:736.2px;width:831px;height:6.4px;border-radius:3.2px"></div>
<svg style="left:22.4px;top:736.2px" width="5" height="6.4" viewBox="0 0 4 6"><path d="M4 0L0 3L4 6Z" fill="#a2a2a2"/></svg>
<svg style="left:1324.6px;top:736.2px" width="5" height="6.4" viewBox="0 0 4 6"><path d="M0 0L4 3L0 6Z" fill="#a2a2a2"/></svg>
<div class="sbt" style="left:1357px;top:84px;width:9px;height:684px"></div>
<div class="sbt" style="left:0;top:758px;width:1366px;height:10px"></div>
<svg style="left:1358px;top:750px" width="6.6" height="5" viewBox="0 0 6 4"><path d="M0 0L3 4L6 0Z" fill="#a2a2a2"/></svg>
<svg style="left:2.2px;top:759.6px" width="5.2" height="6.6" viewBox="0 0 4 6"><path d="M4 0L0 3L4 6Z" fill="#a2a2a2"/></svg>
<svg style="left:1348.6px;top:759.6px" width="5.2" height="6.6" viewBox="0 0 4 6"><path d="M0 0L4 3L0 6Z" fill="#a2a2a2"/></svg>
</body>
</html>
